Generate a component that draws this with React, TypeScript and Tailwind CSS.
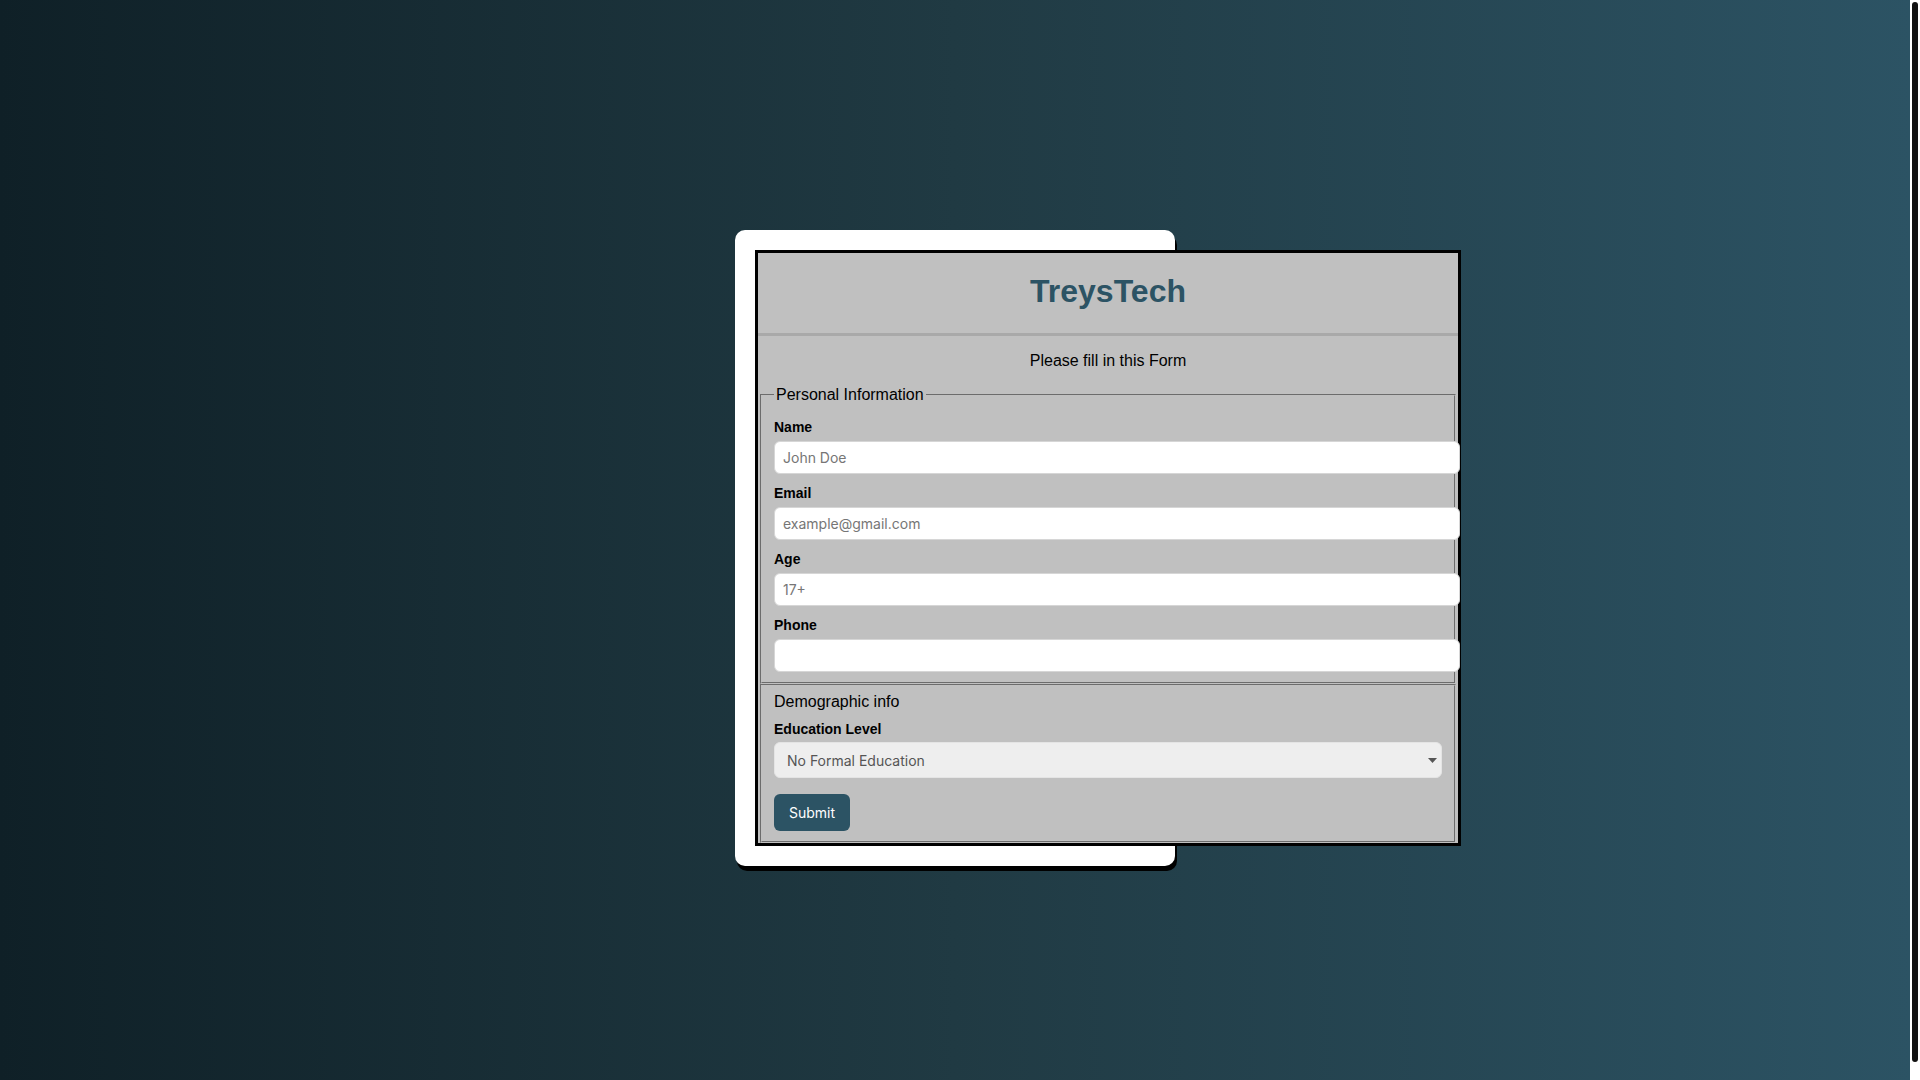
import React from "react";

function Field({ label, placeholder, first, type }: { label: string; placeholder?: string; first?: boolean; type?: string }) {
  return (
    <div className={first ? "mt-[9px]" : "mt-[11px]"}>
      <label className="block text-[14px] leading-[16px] font-bold text-black">{label}</label>
      <input
        type={type || "text"}
        placeholder={placeholder}
        className="mt-[6px] block h-[33px] w-[686px] rounded-[6px] border border-[#d6d6d6] bg-white px-[8px] font-['Inter',sans-serif] text-[14px] text-black outline-none placeholder:text-[#767676]"
      />
    </div>
  );
}

export default function App() {
  return (
    <div className="flex h-screen overflow-hidden">
      <div className="flex-1 overflow-hidden bg-[linear-gradient(to_right,#0f2027,#203a43,#2c5364)] pt-[230px] font-['Liberation_Sans',Arial,sans-serif]">
        <div className="mx-auto w-[440px] rounded-[10px] bg-white p-[20px] shadow-[2px_5px_0_#000]">
          <form className="w-[706px] border-[3px] border-black bg-[#c0c0c0]" onSubmit={(e) => e.preventDefault()}>
            <div className="h-[83px] border-b-[3px] border-[#a9a9a9] pt-[20px] text-center">
              <h1 className="text-[32px] leading-[37px] font-bold text-[#2c5364]">TreysTech</h1>
            </div>
            <p className="mt-[16px] text-center text-[16px] leading-[18px] text-black">Please fill in this Form</p>
            <fieldset className="mx-[2px] mt-[16px] min-w-0 border-2 border-[#c0c0c0] px-[12px] pt-[6px] pb-[10px] [border-style:groove]">
              <legend className="px-[2px] text-[16px] leading-[18px] text-black">Personal Information</legend>
              <Field label="Name" placeholder="John Doe" first />
              <Field label="Email" placeholder="example@gmail.com" type="email" />
              <Field label="Age" placeholder="17+" />
              <Field label="Phone" type="tel" />
            </fieldset>
            <fieldset className="mx-[2px] min-w-0 border-2 border-[#c0c0c0] px-[12px] pt-[7px] pb-[10px] [border-style:groove]">
              <p className="text-[16px] leading-[18px] text-black">Demographic info</p>
              <label className="mt-[10px] block text-[14px] leading-[16px] font-bold text-black">Education Level</label>
              <div className="relative mt-[5px] w-[668px]">
                <select className="block h-[36px] w-full appearance-none rounded-[6px] border border-[#e4e4e4] bg-[#eeeeee] pl-[12px] font-['Inter',sans-serif] text-[14px] text-[#555555] outline-none">
                  <option>No Formal Education</option>
                  <option>High School</option>
                  <option>Bachelor's Degree</option>
                  <option>Master's Degree</option>
                  <option>Doctorate</option>
                </select>
                <svg className="pointer-events-none absolute right-[5px] top-[16px]" width="9" height="5" viewBox="0 0 9 5">
                  <path d="M0 0H9L4.5 5Z" fill="#555555" />
                </svg>
              </div>
              <button
                type="submit"
                className="mt-[16px] block h-[37px] w-[76px] rounded-[6px] bg-[#2c5364] font-['Inter',sans-serif] text-[14px] text-white"
              >
                Submit
              </button>
            </fieldset>
          </form>
        </div>
      </div>
      <div className="flex w-[10px] shrink-0 flex-col bg-white px-[2px] pt-[2px]">
        <div className="h-[1060px] rounded-full bg-[#111111]" />
      </div>
    </div>
  );
}
